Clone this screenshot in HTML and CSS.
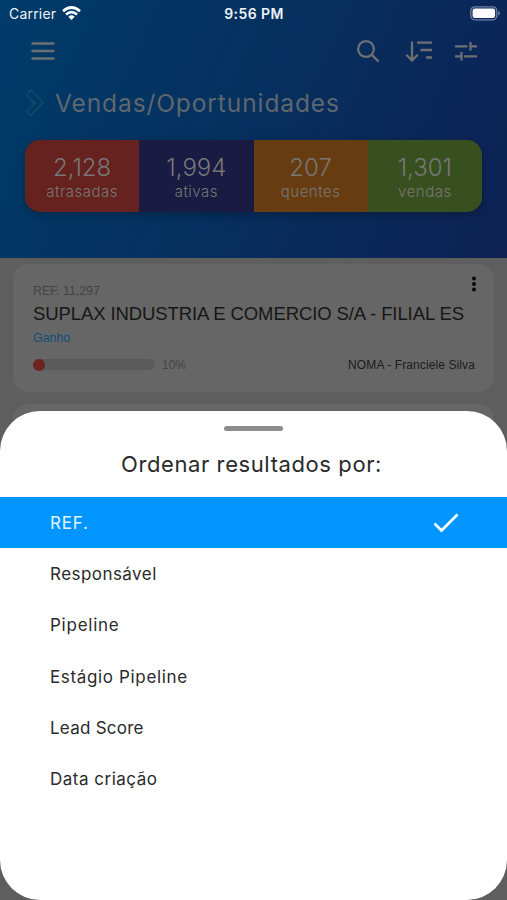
FILE: index.html
```html
<!DOCTYPE html>
<html lang="pt-BR">
<head>
<meta charset="utf-8">
<title>Vendas/Oportunidades</title>
<link rel="stylesheet" href="styles.css">
</head>
<body>
<main class="screen">
  <header class="hero">
    <div class="status">
      <div class="carrier"><span>Carrier</span>
        <svg width="19" height="15" viewBox="0 0 19 15" fill="none" stroke="#fff" stroke-width="2.7"><path d="M1 5.3Q9.500-2.300 18 5.300M4 8.500Q9.500 3.700 15 8.500"/><path d="M9.500 14 6.300 10.700Q9.500 8 12.700 10.700Z" fill="#fff" stroke="none"/></svg>
      </div>
      <span class="clock">9:56 PM</span>
      <svg class="battery" width="31" height="15" viewBox="0 0 31 15"><rect x=".8" y=".8" width="26" height="13" rx="4" fill="none" stroke="#7183a5" stroke-width="1.300"/><rect x="2.600" y="2.500" width="22.500" height="9.600" rx="2.300" fill="#fff"/><path d="M28.300 5v4.600q1.700-.6 1.700-2.300T28.300 5z" fill="#7183a5"/></svg>
    </div>
    <nav class="toolbar">
      <svg width="24" height="20" viewBox="0 0 24 20" stroke="currentColor" stroke-width="2.500"><path d="M.5 2.500h23M.5 10h23M.5 17.500h23"/></svg>
      <div class="actions">
        <svg width="24" height="24" viewBox="0 0 24 24" fill="none" stroke="currentColor" stroke-width="2.300"><circle cx="10" cy="10" r="7.900"/><path d="m15.600 15.600 7 7"/></svg>
        <svg width="28" height="24" viewBox="0 0 28 24" fill="none" stroke="currentColor" stroke-width="2.300"><path d="M7 2.500v19M1.300 15.800 7 21.500l5.700-5.700M12 3.700h15M15.500 11H27M21 18.500h6"/></svg>
        <svg width="24" height="20" viewBox="0 0 24 20" fill="none" stroke="currentColor" stroke-width="2.200"><path d="M1 5.300h12.500M16.500 1v8.500M16.500 5.300H23M1 15.300h5.500M7.500 11v8.500M10 15.300h13"/></svg>
      </div>
    </nav>
    <div class="heading">
      <svg width="20" height="28" viewBox="0 0 20 28" fill="none" stroke="#0d4c67" stroke-width="1.500" stroke-linejoin="round"><path d="M6 1 18 13.500 5.500 26.500 1.500 22.500 10.500 14 1.500 6zM5 12l4.500 3.500"/></svg>
      <h1>Vendas/Oportunidades</h1>
    </div>
    <section class="stats">
      <div class="stat late"><b>2,128</b><span>atrasadas</span></div>
      <div class="stat active"><b>1,994</b><span>ativas</span></div>
      <div class="stat hot"><b>207</b><span>quentes</span></div>
      <div class="stat sold"><b>1,301</b><span>vendas</span></div>
    </section>
  </header>
  <section class="list">
    <article class="card">
      <div class="ref"><span>REF. 11,297</span>
        <svg width="6" height="16" viewBox="0 0 6 16" fill="#080808"><circle cx="3" cy="2.500" r="2"/><circle cx="3" cy="8" r="2"/><circle cx="3" cy="13.500" r="2"/></svg>
      </div>
      <h2>SUPLAX INDUSTRIA E COMERCIO S/A - FILIAL ES</h2>
      <div class="stage">Ganho</div>
      <div class="progress">
        <div class="track"><i></i></div><span class="pct">10%</span>
        <span class="owner">NOMA - Franciele Silva</span>
      </div>
    </article>
    <article class="card"></article>
  </section>
</main>
<section class="sheet">
  <div class="grip"></div>
  <h3><span>Ordenar resultados por:</span></h3>
  <ul>
    <li class="selected"><span class="o1">REF.</span>
      <svg width="26" height="20" viewBox="0 0 26 20" fill="none" stroke="#fff" stroke-width="2.700"><path d="m1.500 10.500 7 7L24.500 1.500"/></svg></li>
    <li><span class="o2">Responsável</span></li>
    <li><span class="o3">Pipeline</span></li>
    <li><span class="o4">Estágio Pipeline</span></li>
    <li><span class="o5">Lead Score</span></li>
    <li><span class="o6">Data criação</span></li>
  </ul>
</section>
</body>
</html>
```
FILE: styles.css
```css
* { box-sizing: border-box; }
body { margin: 0; height: 900px; overflow: hidden; background: #5e5e5e; font-family: Inter, "Liberation Sans", sans-serif; }
h1, h2, h3, ul { margin: 0; padding: 0; font-weight: 400; }
svg { display: block; flex: none; }
.screen { height: 900px; overflow: hidden; }
.hero { height: 258px; background: linear-gradient(115deg, #003b69 0%, #05315f 45%, #0c2558 85%, #0d2153 100%); color: #6c7073; }
.status { height: 27px; padding: 0 6px 0 9px; display: grid; grid-template-columns: 1fr auto 1fr; align-items: center; color: #eef3f8; font-size: 14px; }
.carrier { display: flex; align-items: center; gap: 6px; letter-spacing: .2px; }
.clock { font-weight: 600; letter-spacing: .4px; margin-right: 2px; }
.battery { justify-self: end; }
.toolbar { height: 48px; padding: 0 29px 0 31px; display: flex; align-items: center; justify-content: space-between; }
.actions { display: flex; align-items: center; }
.actions svg:nth-child(2) { margin: 0 21px 0 25px; }
.heading { height: 56px; padding-left: 25px; display: flex; align-items: center; gap: 10px; }
h1 { font-size: 24.500px; font-weight: 400; letter-spacing: .9px; white-space: nowrap; color: #5f676e; }
.stats { margin: 9px 25px 0; height: 72px; display: grid; grid-template-columns: repeat(4, 1fr); border-radius: 15px; overflow: hidden; box-shadow: 0 3px 10px rgba(0, 0, 0, .25); }
.stat { display: flex; flex-direction: column; align-items: center; padding-top: 14px; color: #777; }
.stat b { font-size: 24px; line-height: 28px; font-weight: 300; }
.stat span { font-size: 15px; line-height: 20px; font-weight: 300; letter-spacing: .5px; }
.late { background: #65221e; }
.active { background: #191b43; }
.hot { background: #663c10; }
.sold { background: #38501f; }
.list { padding: 6px 13px; display: grid; grid-template-columns: 481px; gap: 12px; font-family: "Liberation Sans", sans-serif; }
.card { height: 128px; border-radius: 15px; background: #666; padding: 13px 19px 0 20px; }
.ref { height: 24px; display: flex; align-items: center; justify-content: space-between; color: #444; font-size: 12.500px; letter-spacing: -.1px; }
.ref span { padding-top: 3px; }
.ref svg { margin: -10px -2px 0 0; }
h2 { font-size: 18.500px; line-height: 26px; letter-spacing: -.1px; color: #161616; white-space: nowrap; }
.stage { font-size: 12.400px; line-height: 22px; color: #104f7c; }
.progress { display: flex; align-items: center; height: 31px; font-size: 12px; }
.track { width: 122px; height: 11px; border-radius: 6px; background: #5b5b5b; }
.track i { display: block; width: 12px; height: 12px; border-radius: 50%; background: #6b2421; }
.pct { margin-left: 7px; color: #444; }
.owner { margin-left: auto; color: #1c1c1c; letter-spacing: .1px; }
.sheet { position: absolute; top: 411px; left: 0; width: 507px; height: 489px; border-radius: 40px; background: #fff; overflow: hidden; color: #2a2a2a; }
.grip { width: 59px; height: 5px; margin: 15px auto 0; border-radius: 3px; background: #8d8d8d; }
h3 { height: 66px; line-height: 66px; text-align: center; font-size: 22px; letter-spacing: .6px; padding-right: 4px; }
ul { list-style: none; }
li { height: 51.300px; padding: 0 48px 0 50px; display: flex; align-items: center; justify-content: space-between; font-size: 17px; }
.selected { background: #0095ff; color: #e4f4ff; }
.o1 { letter-spacing: .8px; }
.o2 { letter-spacing: .45px; }
.o3 { letter-spacing: .75px; }
.o4 { letter-spacing: .65px; }
.o5 { letter-spacing: .25px; }
.o6 { letter-spacing: .5px; }
```
